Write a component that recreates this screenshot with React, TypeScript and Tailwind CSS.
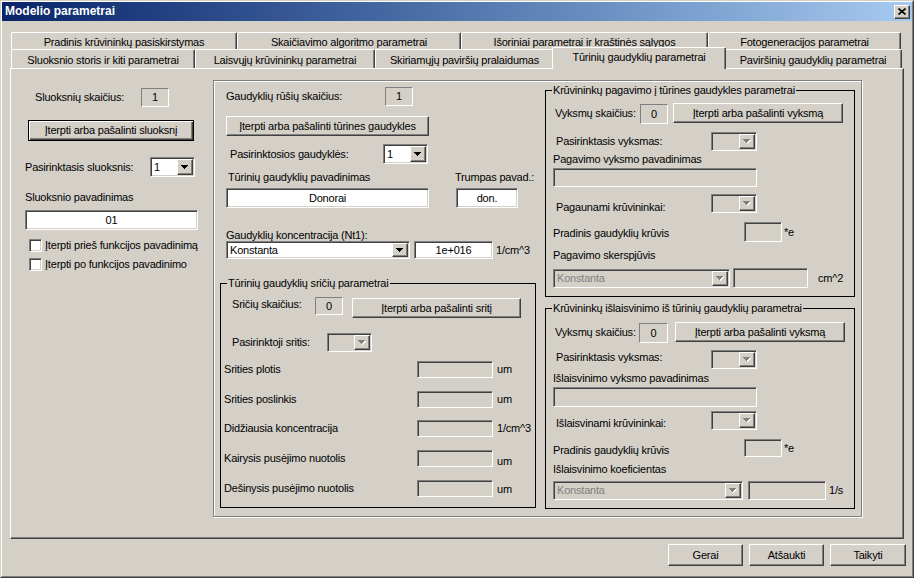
import React from "react";

type P = { className?: string; children?: React.ReactNode };

const raised =
  "border border-t-white border-l-white border-b-[#404040] border-r-[#404040] shadow-[inset_-1px_-1px_0_#808080]";
const sunken =
  "border border-t-[#808080] border-l-[#808080] border-b-white border-r-white shadow-[inset_1px_1px_0_#404040,inset_-1px_-1px_0_#d4d0c8]";
const thinSunken =
  "border border-t-[#808080] border-l-[#808080] border-b-white border-r-white";

function StaticBox({ className = "", children }: P) {
  return (
    <div className={`shrink-0 flex items-center justify-center ${thinSunken} ${className}`}>
      {children}
    </div>
  );
}

function Edit({ className = "", children, disabled }: P & { disabled?: boolean }) {
  return (
    <div
      className={`shrink-0 flex items-center justify-center ${sunken} ${
        disabled ? "bg-[#d4d0c8]" : "bg-white"
      } ${className}`}
    >
      {children}
    </div>
  );
}

function Btn({ className = "", children }: P) {
  return (
    <div className={`shrink-0 flex items-center justify-center bg-[#d4d0c8] ${raised} ${className}`}>
      {children}
    </div>
  );
}

function DefBtn({ className = "", children }: P) {
  return (
    <div
      className={`shrink-0 flex items-center justify-center bg-[#d4d0c8] border border-black shadow-[inset_1px_1px_0_white,inset_-1px_-1px_0_#404040,inset_-2px_-2px_0_#808080] ${className}`}
    >
      {children}
    </div>
  );
}

function Arrow({ disabled }: { disabled?: boolean }) {
  return (
    <svg width="8" height="5" viewBox="0 0 8 5" shapeRendering="crispEdges">
      {disabled && <path d="M1 1h7l-3.5 4z" fill="white" />}
      <path d="M0 0h7l-3.5 4z" fill={disabled ? "#808080" : "black"} />
    </svg>
  );
}

function Combo({
  className = "",
  value,
  disabled,
}: {
  className?: string;
  value?: string;
  disabled?: boolean;
}) {
  return (
    <div
      className={`shrink-0 flex p-px ${sunken} ${disabled ? "bg-[#d4d0c8]" : "bg-white"} ${className}`}
    >
      <div
        className={`flex-1 min-w-0 flex items-center pl-[2px] ${
          disabled ? "text-[#808080]" : ""
        }`}
      >
        {value}
      </div>
      <div className={`w-[16px] shrink-0 flex items-center justify-center bg-[#d4d0c8] ${raised}`}>
        <Arrow disabled={disabled} />
      </div>
    </div>
  );
}

function Check({ className = "" }: { className?: string }) {
  return <div className={`w-[13px] h-[13px] shrink-0 bg-white ${sunken} ${className}`} />;
}

function Group({ title, className = "", children }: P & { title: string }) {
  return (
    <div className={`shrink-0 flex flex-col border border-black ${className}`}>
      <div className="-mt-[7px] ml-[6px] px-px w-fit h-[12px] leading-[12px] bg-[#d4d0c8]">
        {title}
      </div>
      {children}
    </div>
  );
}

function Tab({ label, className = "" }: { label: string; className?: string }) {
  return (
    <div
      className={`shrink-0 flex items-center justify-center pt-[2px] bg-[#d4d0c8] border-l border-t border-r border-l-white border-t-white border-r-[#404040] shadow-[inset_-1px_0_0_#808080] rounded-t-[2px] ${className}`}
    >
      {label}
    </div>
  );
}

const areaRows: { label: string; unit: string; mt: string; unitCls: string }[] = [
  { label: "Srities plotis", unit: "um", mt: "mt-[9px]", unitCls: "" },
  { label: "Srities poslinkis", unit: "um", mt: "mt-[13px]", unitCls: "" },
  { label: "Didžiausia koncentracija", unit: "1/cm^3", mt: "mt-[12px]", unitCls: "" },
  { label: "Kairysis pusėjimo nuotolis", unit: "um", mt: "mt-[13px]", unitCls: "mt-[6px]" },
  { label: "Dešinysis pusėjimo nuotolis", unit: "um", mt: "mt-[13px]", unitCls: "mt-[2px]" },
];

export default function App() {
  return (
    <div className="w-[914px] h-[578px] overflow-hidden bg-[#d4d0c8] text-black text-[11px] leading-[13px] tracking-[-0.2px] whitespace-nowrap font-['Liberation_Sans',Arial,sans-serif] border border-t-[#d4d0c8] border-l-[#d4d0c8] border-b-[#404040] border-r-[#404040]">
      <div className="h-full flex flex-col border border-t-white border-l-white border-b-[#808080] border-r-[#808080]">
        {/* Title bar */}
        <div className="h-[19px] shrink-0 flex items-center justify-between bg-linear-to-r from-[#0a246a] to-[#a6caf0] pl-[3px] pr-[2px]">
          <span className="text-white font-bold text-[12px] tracking-normal">Modelio parametrai</span>
          <div className={`w-[16px] h-[14px] bg-[#d4d0c8] flex items-center justify-center ${raised}`}>
            <svg width="8" height="7" viewBox="0 0 8 7">
              <path d="M0.5 0.5L7.5 6.5M7.5 0.5L0.5 6.5" stroke="black" strokeWidth="1.6" />
            </svg>
          </div>
        </div>

        {/* Tabs row 1 */}
        <div className="mt-[11px] ml-[9px] h-[17px] flex">
          <Tab className="w-[226px] h-[17px]" label="Pradinis krūvininkų pasiskirstymas" />
          <Tab className="w-[224px] h-[17px]" label="Skaičiavimo algoritmo parametrai" />
          <Tab className="w-[247px] h-[17px]" label="Išoriniai parametrai ir kraštinės sąlygos" />
          <Tab className="w-[193px] h-[17px]" label="Fotogeneracijos parametrai" />
        </div>
        {/* Tabs row 2 */}
        <div className="ml-[9px] h-[19px] flex items-start">
          <Tab className="w-[184px] h-[19px]" label="Sluoksnio storis ir kiti parametrai" />
          <Tab className="w-[180px] h-[19px]" label="Laisvųjų krūvininkų parametrai" />
          <Tab className="w-[179px] h-[19px]" label="Skiriamųjų paviršių pralaidumas" />
          <Tab
            className="relative z-10 -mt-[2px] -mx-[2px] w-[174px] h-[22px] !pt-0 !pb-[3px]"
            label="Tūrinių gaudyklių parametrai"
          />
          <Tab className="w-[178px] h-[19px]" label="Paviršinių gaudyklių parametrai" />
        </div>

        {/* Page */}
        <div className="ml-[8px] w-[894px] h-[471px] shrink-0 flex items-start pt-[11px] border border-t-white border-l-white border-b-[#404040] border-r-[#404040] shadow-[inset_-1px_-1px_0_#808080]">
          {/* Left column */}
          <div className="ml-[14px] w-[174px] shrink-0 flex flex-col">
            <div className="mt-[8px] h-[19px] flex items-center">
              <span className="ml-[10px] w-[106px] shrink-0">Sluoksnių skaičius:</span>
              <StaticBox className="w-[28px] h-[19px]">1</StaticBox>
            </div>
            <DefBtn className="mt-[13px] ml-[3px] w-[166px] h-[21px]">
              Įterpti arba pašalinti sluoksnį
            </DefBtn>
            <div className="mt-[16px] h-[20px] flex items-center">
              <span className="w-[125px] shrink-0">Pasirinktasis sluoksnis:</span>
              <Combo className="w-[45px] h-[20px]" value="1" />
            </div>
            <div className="mt-[14px] h-[13px]">Sluoksnio pavadinimas</div>
            <Edit className="mt-[6px] w-[173px] h-[20px]">01</Edit>
            <div className="mt-[9px] h-[13px] flex items-center">
              <Check className="ml-[4px]" />
              <span className="ml-[3px]">Įterpti prieš funkcijos pavadinimą</span>
            </div>
            <div className="mt-[6px] h-[13px] flex items-center">
              <Check className="ml-[4px]" />
              <span className="ml-[3px]">Įterpti po funkcijos pavadinimo</span>
            </div>
          </div>

          {/* Middle etched panel */}
          <div className="ml-[14px] w-[649px] h-[437px] shrink-0 flex border border-[#808080] shadow-[inset_1px_1px_0_white,1px_1px_0_white]">
            {/* Sub column 1 */}
            <div className="w-[322px] shrink-0 flex flex-col">
              <div className="mt-[6px] h-[19px] flex items-center">
                <span className="ml-[12px] w-[159px] shrink-0">Gaudyklių rūšių skaičius:</span>
                <StaticBox className="w-[28px] h-[19px]">1</StaticBox>
              </div>
              <Btn className="mt-[10px] ml-[12px] w-[203px] h-[20px]">
                Įterpti arba pašalinti tūrines gaudykles
              </Btn>
              <div className="mt-[8px] h-[20px] flex items-center">
                <span className="ml-[16px] w-[153px] shrink-0">Pasirinktosios gaudyklės:</span>
                <Combo className="w-[45px] h-[20px]" value="1" />
              </div>
              <div className="mt-[7px] h-[13px] flex">
                <span className="ml-[14px] w-[227px] shrink-0">Tūrinių gaudyklių pavadinimas</span>
                <span>Trumpas pavad.:</span>
              </div>
              <div className="mt-[4px] h-[20px] flex">
                <Edit className="ml-[12px] w-[203px] h-[20px]">Donorai</Edit>
                <Edit className="ml-[27px] w-[62px] h-[20px]">don.</Edit>
              </div>
              <div className="mt-[21px] ml-[12px] h-[12px] leading-[12px]">
                Gaudyklių koncentracija (Nt1):
              </div>
              <div className="h-[18px] flex items-center">
                <Combo className="ml-[12px] w-[184px] h-[18px]" value="Konstanta" />
                <Edit className="ml-[4px] w-[79px] h-[18px]">1e+016</Edit>
                <span className="ml-[3px]">1/cm^3</span>
              </div>

              <Group
                className="mt-[24px] ml-[6px] w-[316px] h-[225px]"
                title="Tūrinių gaudyklių sričių parametrai"
              >
                <div className="mt-[8px] h-[21px] flex items-start">
                  <span className="ml-[11px] mt-px w-[83px] shrink-0">Sričių skaičius:</span>
                  <StaticBox className="w-[28px] h-[18px]">0</StaticBox>
                  <Btn className="ml-[9px] mt-px w-[169px] h-[20px]">Įterpti arba pašalinti sritį</Btn>
                </div>
                <div className="mt-[15px] h-[19px] flex items-center">
                  <span className="ml-[11px] w-[95px] shrink-0">Pasirinktoji sritis:</span>
                  <Combo disabled className="w-[45px] h-[19px]" />
                </div>
                {areaRows.map((r) => (
                  <div key={r.label} className={`${r.mt} h-[17px] flex items-center`}>
                    <span className="ml-[3px] w-[193px] shrink-0">{r.label}</span>
                    <Edit disabled className="w-[76px] h-[17px]" />
                    <span className={`ml-[4px] ${r.unitCls}`}>{r.unit}</span>
                  </div>
                ))}
              </Group>
            </div>

            {/* Sub column 2 */}
            <div className="ml-[9px] w-[310px] shrink-0 flex flex-col">
              <Group
                className="mt-[9px] w-[310px] h-[207px]"
                title="Krūvininkų pagavimo į tūrines gaudykles parametrai"
              >
                <div className="mt-[7px] h-[21px] flex items-center">
                  <span className="ml-[9px] w-[85px] shrink-0">Vyksmų skaičius:</span>
                  <StaticBox className="self-end w-[28px] h-[20px]">0</StaticBox>
                  <Btn className="self-start ml-[5px] w-[170px] h-[20px]">Įterpti arba pašalinti vyksmą</Btn>
                </div>
                <div className="mt-[8px] h-[19px] flex items-center">
                  <span className="ml-[10px] w-[155px] shrink-0">Pasirinktasis vyksmas:</span>
                  <Combo disabled className="w-[46px] h-[19px]" />
                </div>
                <div className="mt-[2px] ml-[7px] h-[12px] leading-[12px]">Pagavimo vyksmo pavadinimas</div>
                <Edit disabled className="mt-[3px] ml-[7px] w-[204px] h-[19px]" />
                <div className="mt-[7px] h-[19px] flex items-start">
                  <span className="ml-[10px] mt-[7px] w-[155px] shrink-0">Pagaunami krūvininkai:</span>
                  <Combo disabled className="w-[46px] h-[19px]" />
                </div>
                <div className="mt-[9px] h-[20px] flex items-start">
                  <span className="ml-[7px] mt-[5px] w-[191px] shrink-0">Pradinis gaudyklių krūvis</span>
                  <Edit disabled className="w-[38px] h-[20px]" />
                  <span className="ml-[2px] mt-[4px]">*e</span>
                </div>
                <div className="mt-[7px] ml-[7px] h-[12px] leading-[12px]">Pagavimo skerspjūvis</div>
                <div className="mt-[7px] h-[20px] flex items-center">
                  <Combo disabled className="ml-[7px] w-[177px] h-[19px]" value="Konstanta" />
                  <Edit disabled className="ml-[3px] w-[75px] h-[20px]" />
                  <span className="ml-[10px]">cm^2</span>
                </div>
              </Group>

              <Group
                className="mt-[11px] w-[310px] h-[201px]"
                title="Krūvininkų išlaisvinimo iš tūrinių gaudyklių parametrai"
              >
                <div className="mt-[8px] h-[21px] flex items-center">
                  <span className="ml-[9px] w-[84px] shrink-0">Vyksmų skaičius:</span>
                  <StaticBox className="self-end w-[29px] h-[20px]">0</StaticBox>
                  <Btn className="self-start ml-[7px] w-[170px] h-[20px]">Įterpti arba pašalinti vyksmą</Btn>
                </div>
                <div className="mt-[7px] h-[19px] flex items-start">
                  <span className="ml-[10px] mt-px w-[155px] shrink-0">Pasirinktasis vyksmas:</span>
                  <Combo disabled className="w-[46px] h-[19px]" />
                </div>
                <div className="mt-[3px] ml-[7px] h-[12px] leading-[12px]">Išlaisvinimo vyksmo pavadinimas</div>
                <Edit disabled className="mt-[3px] ml-[7px] w-[204px] h-[20px]" />
                <div className="mt-[4px] h-[19px] flex items-start">
                  <span className="ml-[10px] mt-[6px] w-[155px] shrink-0">Išlaisvinami krūvininkai:</span>
                  <Combo disabled className="w-[46px] h-[19px]" />
                </div>
                <div className="mt-[9px] h-[18px] flex items-start">
                  <span className="ml-[7px] mt-[5px] w-[191px] shrink-0">Pradinis gaudyklių krūvis</span>
                  <Edit disabled className="w-[38px] h-[18px]" />
                  <span className="ml-[2px] mt-[3px]">*e</span>
                </div>
                <div className="mt-[6px] ml-[7px] h-[12px] leading-[12px]">Išlaisvinimo koeficientas</div>
                <div className="mt-[6px] h-[19px] flex items-center">
                  <Combo disabled className="ml-[7px] w-[190px] h-[19px]" value="Konstanta" />
                  <Edit disabled className="ml-[5px] w-[78px] h-[19px]" />
                  <span className="ml-[3px]">1/s</span>
                </div>
              </Group>
            </div>
          </div>
        </div>

        {/* Bottom buttons */}
        <div className="mt-[5px] h-[22px] flex justify-end pr-[6px]">
          <Btn className="w-[75px] h-[22px]">Gerai</Btn>
          <Btn className="ml-[6px] w-[75px] h-[22px]">Atšaukti</Btn>
          <Btn className="ml-[6px] w-[76px] h-[22px]">Taikyti</Btn>
        </div>
      </div>
    </div>
  );
}
